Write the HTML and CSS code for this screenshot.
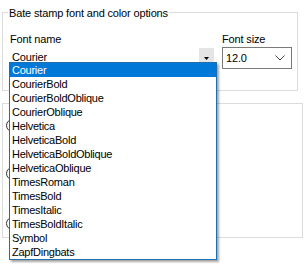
FILE: index.html
```html
<!DOCTYPE html>
<html lang="en">
<head>
    <meta charset="UTF-8">
    <title>Date stamp options</title>
    <link rel="stylesheet" href="styles.css">
</head>
<body>
    <div class="group group-font">
        <span class="legend">Bate stamp font and color options</span>
        <div class="fields">
            <div class="field field-name">
                <label>Font name</label>
                <div class="combo combo-name">
                    <span class="combo-text">Courier</span>
                    <span class="drop-btn">
                        <svg width="5" height="3" viewBox="0 0 5 3"><path d="M0 0H5L2.5 3Z" fill="#000"/></svg>
                    </span>
                </div>
            </div>
            <div class="field field-size">
                <label>Font size</label>
                <div class="combo combo-size">
                    <span class="combo-text">12.0</span>
                    <svg class="chevron" width="10" height="6" viewBox="0 0 10 6"><path d="M0.5 0.5L5 5L9.5 0.5" fill="none" stroke="#444" stroke-width="1"/></svg>
                </div>
            </div>
        </div>
    </div>

    <div class="group group-color">
        <span class="radio r1"></span>
        <span class="radio r2"></span>
        <span class="radio r3"></span>
    </div>

    <!-- open dropdown of the font name combo -->
    <ul class="font-list">
        <li class="selected">Courier</li>
        <li>CourierBold</li>
        <li>CourierBoldOblique</li>
        <li>CourierOblique</li>
        <li>Helvetica</li>
        <li>HelveticaBold</li>
        <li>HelveticaBoldOblique</li>
        <li>HelveticaOblique</li>
        <li>TimesRoman</li>
        <li>TimesBold</li>
        <li>TimesItalic</li>
        <li>TimesBoldItalic</li>
        <li>Symbol</li>
        <li>ZapfDingbats</li>
    </ul>
</body>
</html>
```

FILE: styles.css
```css
* {
    box-sizing: border-box;
    font-family: 'Liberation Sans', Arial, sans-serif;
}

body {
    margin: 0;
    background-color: #ffffff;
    color: #000;
    font-size: 11px;
    line-height: 13px;
    letter-spacing: -0.15px;
    position: relative;
    width: 306px;
    height: 266px;
    overflow: hidden;
}

.group {
    border: 1px solid #dcdcdc;
    margin-left: 2px;
}

.group-font {
    margin-top: 12px;
    width: 296px;
    height: 79px;
}

.legend {
    display: inline-block;
    margin: -6px 0 0 5px;
    padding: 0 1px;
    background-color: #fff;
    vertical-align: top;
}

.fields {
    display: flex;
    gap: 7px;
    margin-top: 7px;
    padding-left: 7px;
}

.field label {
    display: block;
    margin-bottom: 1px;
}

.field-name {
    width: 205px;
}

.combo {
    display: flex;
    align-items: center;
    position: relative;
}

.combo-name {
    margin-left: -1px;
    width: 206px;
    height: 21px;
    padding-left: 3px;
}

.drop-btn {
    margin-left: auto;
    margin-right: 1px;
    width: 15px;
    height: 20px;
    margin-top: 1px;
    background-color: #e5e5e5;
    display: flex;
    align-items: center;
    justify-content: center;
}

.combo-size {
    width: 70px;
    height: 22px;
    border: 1px solid #7a7a7a;
    padding-left: 3px;
}

.chevron {
    margin-left: auto;
    margin-right: 6px;
}

.group-color {
    margin-top: 12px;
    width: 301px;
    height: 135px;
    padding: 15px 0 0 3px;
    display: flex;
    flex-direction: column;
}

.radio {
    width: 13px;
    height: 13px;
    border: 1px solid #333;
    border-radius: 50%;
}

.r2 {
    margin-top: 35px;
}

.r3 {
    margin-top: 37px;
}

.font-list {
    position: absolute;
    left: 9px;
    top: 62px;
    width: 208px;
    margin: 0;
    padding: 0;
    list-style: none;
    background-color: #fff;
    border: 1px solid #1f6fae;
    box-shadow: 2px 2px 2px rgba(0, 0, 0, 0.35);
}

.font-list li {
    height: 14px;
    line-height: 14px;
    padding-left: 2px;
    letter-spacing: -0.25px;
}

.font-list .selected {
    background-color: #0078d7;
    color: #fff;
}
```
